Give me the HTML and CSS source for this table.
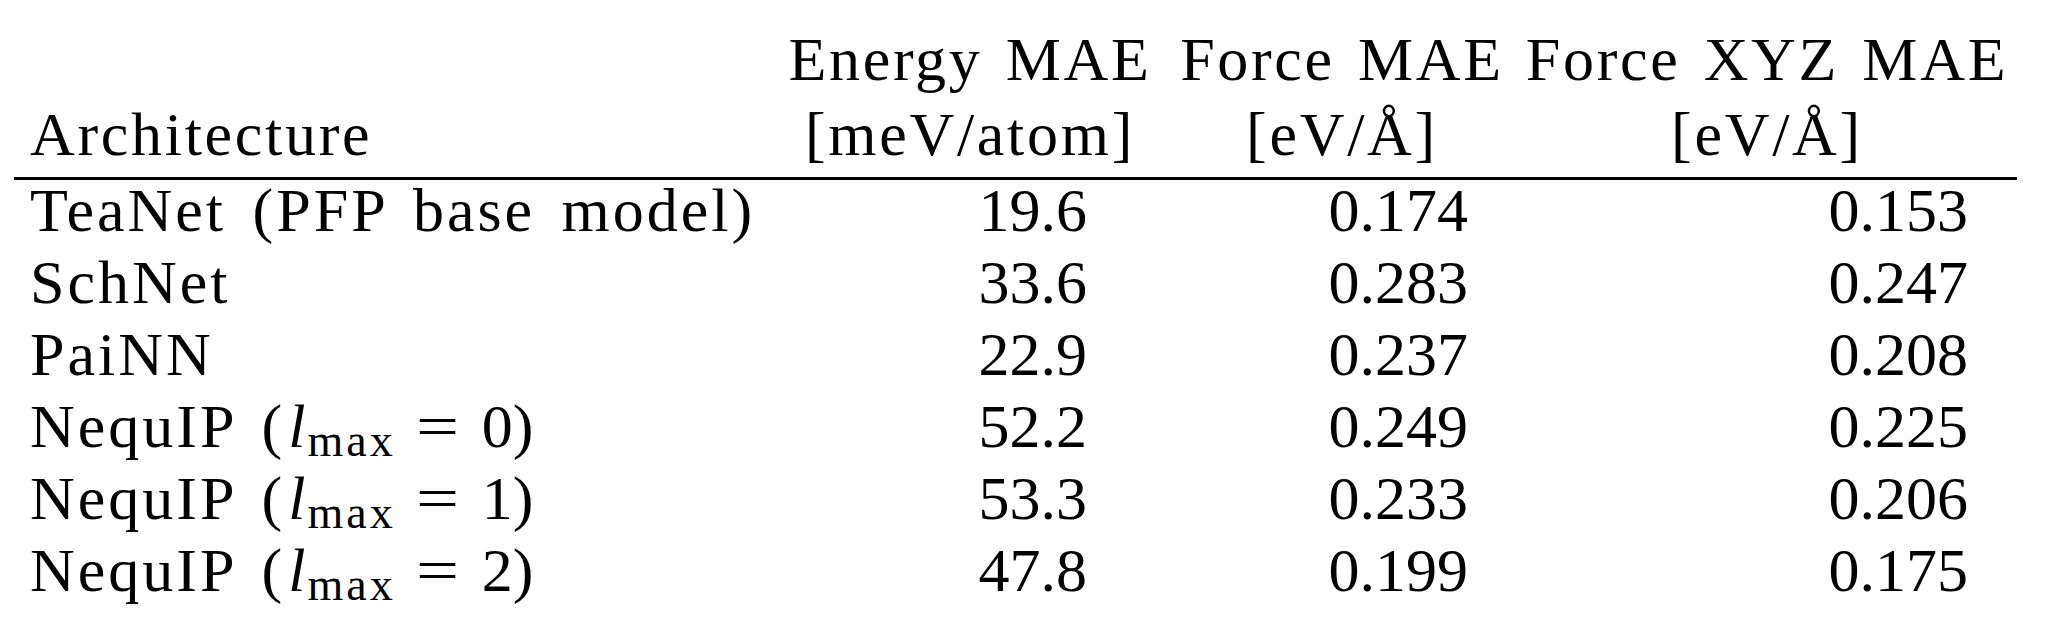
FILE: index.html
```html
<!DOCTYPE html>
<html lang="en">
<head>
<meta charset="utf-8">
<title>Architecture comparison</title>
<link rel="stylesheet" href="styles.css">
</head>
<body>
<div class="results" role="table">
  <div class="hd arch" role="columnheader">Architecture</div>
  <div class="hd" role="columnheader"><div>Energy MAE</div><div>[meV/atom]</div></div>
  <div class="hd" role="columnheader"><div>Force MAE</div><div>[eV/Å]</div></div>
  <div class="hd" role="columnheader"><div>Force XYZ MAE</div><div>[eV/Å]</div></div>

  <div class="cell name">TeaNet (PFP base model)</div>
  <div class="cell num c2">19.6</div>
  <div class="cell num c3">0.174</div>
  <div class="cell num c4">0.153</div>

  <div class="cell name">SchNet</div>
  <div class="cell num c2">33.6</div>
  <div class="cell num c3">0.283</div>
  <div class="cell num c4">0.247</div>

  <div class="cell name">PaiNN</div>
  <div class="cell num c2">22.9</div>
  <div class="cell num c3">0.237</div>
  <div class="cell num c4">0.208</div>

  <div class="cell name">NequIP (<span class="math"><i class="var">l</i><sub>max</sub><span class="rel">=</span>0</span>)</div>
  <div class="cell num c2">52.2</div>
  <div class="cell num c3">0.249</div>
  <div class="cell num c4">0.225</div>

  <div class="cell name">NequIP (<span class="math"><i class="var">l</i><sub>max</sub><span class="rel">=</span>1</span>)</div>
  <div class="cell num c2">53.3</div>
  <div class="cell num c3">0.233</div>
  <div class="cell num c4">0.206</div>

  <div class="cell name">NequIP (<span class="math"><i class="var">l</i><sub>max</sub><span class="rel">=</span>2</span>)</div>
  <div class="cell num c2">47.8</div>
  <div class="cell num c3">0.199</div>
  <div class="cell num c4">0.175</div>
</div>
</body>
</html>
```
FILE: styles.css
```css
html, body {
  margin: 0;
  padding: 0;
  background: #ffffff;
}

body {
  color: #000000;
  font-family: "Liberation Serif", "Times New Roman", serif;
  font-size: 62px;
}

.results {
  display: grid;
  grid-template-columns: 759px 394px 350px 500px;
  width: 2003px;
  margin-left: 14px;
}

.hd {
  padding: 22px 0 5px;
  line-height: 75px;
  border-bottom: 3px solid #000000;
  text-align: center;
  white-space: nowrap;
  letter-spacing: 2.7px;
  word-spacing: 5px;
}

.hd.arch {
  display: flex;
  align-items: flex-end;
  padding-left: 16px;
  text-align: left;
}

.cell {
  padding: 0 0 12px;
  line-height: 60px;
  white-space: nowrap;
}

.name {
  padding-left: 16px;
  letter-spacing: 3px;
  word-spacing: 8px;
}

.num {
  text-align: right;
}

.c2 {
  padding-right: 80px;
}

.c3,
.c4 {
  padding-right: 49px;
}

.math {
  letter-spacing: 0;
  word-spacing: 0;
}

.var {
  font-style: italic;
  margin-left: 3px;
}

.math sub {
  font-size: 46px;
  line-height: 0;
  vertical-align: -9px;
  letter-spacing: 3px;
  margin-left: 2px;
}

.rel {
  display: inline-block;
  transform: scaleX(1.23);
  margin: 0 27px 0 24px;
}
```
